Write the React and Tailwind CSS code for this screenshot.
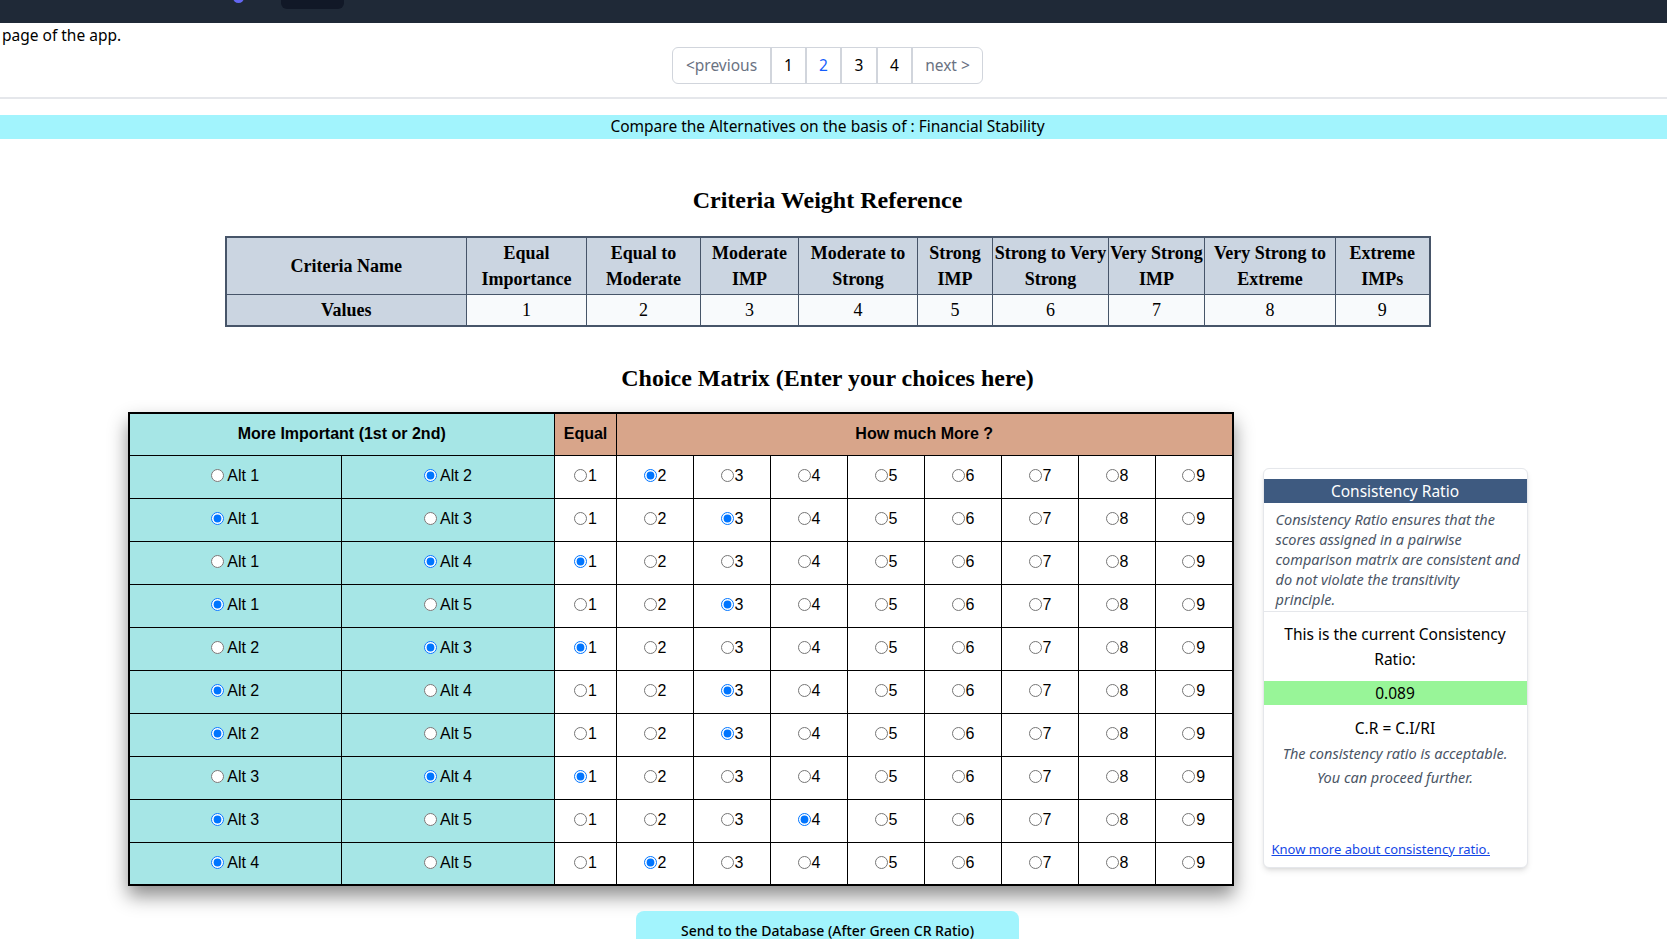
import React from "react";

const rows = [
  ["Alt 1", "Alt 2", 2, 2],
  ["Alt 1", "Alt 3", 1, 3],
  ["Alt 1", "Alt 4", 2, 1],
  ["Alt 1", "Alt 5", 1, 3],
  ["Alt 2", "Alt 3", 2, 1],
  ["Alt 2", "Alt 4", 1, 3],
  ["Alt 2", "Alt 5", 1, 3],
  ["Alt 3", "Alt 4", 2, 1],
  ["Alt 3", "Alt 5", 1, 4],
  ["Alt 4", "Alt 5", 1, 2],
];

const weights = [
  ["Equal", "Importance", 1, "w-[120px]"],
  ["Equal to", "Moderate", 2, "w-[114px]"],
  ["Moderate", "IMP", 3, "w-[98px]"],
  ["Moderate to", "Strong", 4, "w-[119px]"],
  ["Strong", "IMP", 5, "w-[75px]"],
  ["Strong to Very", "Strong", 6, "w-[116px]"],
  ["Very Strong", "IMP", 7, "w-[96px]"],
  ["Very Strong to", "Extreme", 8, "w-[131px]"],
  ["Extreme", "IMPs", 9, "w-[94px]"],
];

function Radio({ name, checked, label, gap }) {
  return (
    <label className="inline-flex items-center">
      <input
        type="radio"
        name={name}
        checked={checked}
        readOnly
        className={`${gap ? "mr-[3px]" : "mr-[1px]"} w-[13px] h-[13px]`}
      />
      {label}
    </label>
  );
}

export default function App() {
  return (
    <div className="min-h-[939px] bg-white text-black font-['Noto_Sans',sans-serif]">
      {/* top nav (scrolled) */}
      <div className="h-[23px] bg-[#1f2937] flex items-start overflow-hidden">
        <div className="ml-[233px] -mt-[8px] w-[11px] h-[11px] rounded-full bg-[#6366f1]" />
        <div className="ml-[37px] w-[63px] h-[9px] rounded-b-md bg-[#111827]" />
      </div>

      <div className="pl-[2px] text-[15.5px] leading-6">page of the app.</div>

      {/* pagination */}
      <div className="flex justify-center pr-3">
        <div className="flex h-[37px] border border-gray-300 rounded-md text-[15.5px]">
          <div className="w-[97px] flex items-center justify-center text-gray-500">&lt;previous</div>
          <div className="w-[35px] flex items-center justify-center border-l-2 border-gray-300">1</div>
          <div className="w-[35px] flex items-center justify-center border-l-2 border-gray-300 text-blue-600">2</div>
          <div className="w-[36px] flex items-center justify-center border-l-2 border-gray-300">3</div>
          <div className="w-[35px] flex items-center justify-center border-l-2 border-gray-300">4</div>
          <div className="w-[71px] flex items-center justify-center border-l-2 border-gray-300 text-gray-500">next &gt;</div>
        </div>
      </div>

      <div className="mt-[13px] h-[2px] bg-gray-200" />

      <div className="mt-[16px] h-[24px] bg-cyan-200 flex items-center justify-center pr-3 text-[15.5px]">
        Compare the Alternatives on the basis of : Financial Stability
      </div>

      <div className="pr-3 flex flex-col items-center font-['Liberation_Serif',serif]">
        <h2 className="mt-[45px] text-2xl leading-8 font-bold">Criteria Weight Reference</h2>

        <table className="mt-[20px] border-collapse border-2 border-[#475569] text-lg leading-[26px] table-fixed w-[1204px]">
          <thead>
            <tr className="bg-[#cbd5e1]">
              <th className="w-[241px] border border-[#475569] py-[2px] font-bold">Criteria Name</th>
              {weights.map(([a, b, , w]) => (
                <th key={a + b} className={`${w} border border-[#475569] py-[2px] font-bold`}>
                  {a}
                  <br />
                  {b}
                </th>
              ))}
            </tr>
          </thead>
          <tbody>
            <tr>
              <td className="bg-[#cbd5e1] border border-[#475569] py-[2px] text-center font-bold">Values</td>
              {weights.map(([a, b, v]) => (
                <td key={v} className="bg-slate-50 border border-[#475569] py-[2px] text-center">
                  {v}
                </td>
              ))}
            </tr>
          </tbody>
        </table>

        <h2 className="mt-[35px] text-2xl leading-8 font-bold">Choice Matrix (Enter your choices here)</h2>
      </div>

      <div className="pr-3 mt-[18px] flex justify-center items-start gap-[29px]">
        <table className="table-fixed w-[1106px] border-collapse border-2 border-black font-['Liberation_Sans',sans-serif] text-base shadow-[0_10px_18px_rgba(0,0,0,0.45)]">
          <thead>
            <tr className="h-[42px]">
              <th colSpan={2} className="w-[426px] bg-[#a6e6e6] border border-black font-bold">
                More Important (1st or 2nd)
              </th>
              <th className="w-[62px] bg-[#d8a58a] border border-black font-bold">Equal</th>
              <th colSpan={8} className="bg-[#d8a58a] border border-black font-bold">How much More ?</th>
            </tr>
          </thead>
          <tbody>
            {rows.map(([a, b, sel, val], i) => (
              <tr key={i} className="h-[43px]">
                <td className="w-[213px] bg-[#a6e6e6] border border-black text-center">
                  <Radio name={`alt${i}`} checked={sel === 1} label={a} gap />
                </td>
                <td className="w-[213px] bg-[#a6e6e6] border border-black text-center">
                  <Radio name={`alt${i}`} checked={sel === 2} label={b} gap />
                </td>
                {[1, 2, 3, 4, 5, 6, 7, 8, 9].map((n) => (
                  <td key={n} className="bg-white border border-black text-center">
                    <Radio name={`val${i}`} checked={val === n} label={n} />
                  </td>
                ))}
              </tr>
            ))}
          </tbody>
        </table>

        <div className="mt-[56px] w-[265px] h-[400px] rounded-md border border-gray-200 shadow-md bg-white pt-[10px] flex flex-col">
          <div className="bg-[#3e5a80] text-white text-center h-[24px] leading-[24px] text-[15.5px]">Consistency Ratio</div>
          <p className="pl-3 pt-[6px] pb-[2px] text-[14.5px] italic text-gray-600 leading-5 whitespace-nowrap">
            Consistency Ratio ensures that the
            <br />
            scores assigned in a pairwise
            <br />
            comparison matrix are consistent and
            <br />
            do not violate the transitivity
            <br />
            principle.
          </p>
          <div className="border-t border-gray-200" />
          <p className="mt-[10px] px-3 text-center text-[15.5px] leading-[25px]">This is the current Consistency Ratio:</p>
          <div className="mt-[9px] h-[24px] bg-[#98f598] text-center leading-[24px] text-[15.5px]">0.089</div>
          <p className="mt-[11px] text-center text-[15.5px] leading-6">C.R = C.I/RI</p>
          <p className="mt-[1px] text-center text-[14.5px] italic text-gray-600 leading-[24px]">
            The consistency ratio is acceptable.
            <br />
            You can proceed further.
          </p>
          <a href="#" className="mt-auto mb-[9px] ml-[8px] text-[13px] leading-[18px] text-blue-700 underline">
            Know more about consistency ratio.
          </a>
        </div>
      </div>

      <div className="pr-3 mt-[25px] flex justify-center">
        <button className="w-[383px] h-[40px] rounded-t-lg bg-cyan-200 text-sm font-medium flex items-start justify-center pt-[10px]">
          Send to the Database (After Green CR Ratio)
        </button>
      </div>
    </div>
  );
}
